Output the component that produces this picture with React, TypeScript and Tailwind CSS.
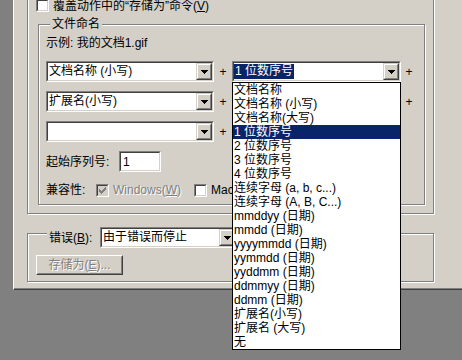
import React from "react";

const items = [
  "文档名称",
  "文档名称 (小写)",
  "文档名称(大写)",
  "1 位数序号",
  "2 位数序号",
  "3 位数序号",
  "4 位数序号",
  "连续字母 (a, b, c...)",
  "连续字母 (A, B, C...)",
  "mmddyy (日期)",
  "mmdd (日期)",
  "yyyymmdd (日期)",
  "yymmdd (日期)",
  "yyddmm (日期)",
  "ddmmyy (日期)",
  "ddmm (日期)",
  "扩展名(小写)",
  "扩展名 (大写)",
  "无",
];

function Arrow() {
  return (
    <svg width="7" height="4" viewBox="0 0 7 4" shapeRendering="crispEdges" className="block">
      <rect x="0" y="0" width="7" height="1" />
      <rect x="1" y="1" width="5" height="1" />
      <rect x="2" y="2" width="3" height="1" />
      <rect x="3" y="3" width="1" height="1" />
    </svg>
  );
}

function DropButton() {
  return (
    <div className="w-[16px] h-full shrink-0 border border-t-[#d4d0c8] border-l-[#d4d0c8] border-r-[#404040] border-b-[#404040] bg-[#d4d0c8]">
      <div className="h-full border border-t-white border-l-white border-r-[#808080] border-b-[#808080] flex items-center justify-center">
        <Arrow />
      </div>
    </div>
  );
}

function Combo({ w, text, focus }: { w: string; text?: string; focus?: boolean }) {
  return (
    <div className={`${w} h-[21px] shrink-0 border border-t-[#808080] border-l-[#808080] border-r-white border-b-white`}>
      <div className="h-full flex border border-t-[#404040] border-l-[#404040] border-r-[#d4d0c8] border-b-[#d4d0c8] bg-white">
        <div className="flex-1 flex items-center overflow-hidden whitespace-nowrap">
          {text && (
            <span className={focus ? "bg-[#0a246a] text-white px-[1px] leading-[15px]" : "px-[1px] leading-[15px]"}>
              {text}
            </span>
          )}
        </div>
        <DropButton />
      </div>
    </div>
  );
}

function Check({ checked, disabled }: { checked?: boolean; disabled?: boolean }) {
  return (
    <div className="w-[13px] h-[13px] shrink-0 border border-t-[#808080] border-l-[#808080] border-r-white border-b-white">
      <div
        className={`h-full border border-t-[#404040] border-l-[#404040] border-r-[#d4d0c8] border-b-[#d4d0c8] flex items-center justify-center ${
          disabled ? "bg-[#d4d0c8]" : "bg-white"
        }`}
      >
        {checked && (
          <svg width="7" height="7" viewBox="0 0 7 7" shapeRendering="crispEdges" fill={disabled ? "#808080" : "#000"}>
            <rect x="0" y="2" width="1" height="3" />
            <rect x="1" y="3" width="1" height="3" />
            <rect x="2" y="4" width="1" height="3" />
            <rect x="3" y="3" width="1" height="3" />
            <rect x="4" y="2" width="1" height="3" />
            <rect x="5" y="1" width="1" height="3" />
            <rect x="6" y="0" width="1" height="3" />
          </svg>
        )}
      </div>
    </div>
  );
}

function Plus({ w }: { w: string }) {
  return <div className={`${w} shrink-0 flex items-center justify-center`}>+</div>;
}

export default function App() {
  return (
    <div className="relative w-[462px] h-[360px] overflow-hidden bg-[#808080] text-[12px] leading-[14px] text-black font-['Liberation_Sans','Noto_Sans_CJK_SC',sans-serif]">
      {/* dialog, top is scrolled off */}
      <div className="ml-[13px] mt-[-30px] w-[449px] h-[320px] bg-[#d4d0c8] border-l border-l-white border-b border-b-[#404040] shadow-[inset_0_-1px_0_#808080] pl-[13px] pt-[10px]">
        <div className="w-[407px] h-[234px] border border-[#808080] shadow-[inset_1px_1px_0_#fff,1px_1px_0_#fff] flex flex-col">
          <div className="mt-[18px] ml-[8px] h-[13px] flex items-center gap-[4px] whitespace-nowrap">
            <Check />
            <span>
              覆盖动作中的“存储为”命令(<span className="underline">V</span>)
            </span>
          </div>

          {/* 文件命名 */}
          <div className="relative mt-[12px] ml-[10px] w-[387px] h-[181px] border border-[#808080] shadow-[inset_1px_1px_0_#fff,1px_1px_0_#fff]">
            <span className="absolute left-[11px] top-[-8px] px-[2px] bg-[#d4d0c8]">文件命名</span>
            <div className="pl-[7px] flex flex-col">
              <div className="mt-[11px]">示例: 我的文档1.gif</div>
              <div className="mt-[11px] flex h-[21px]">
                <Combo w="w-[168px]" text="文档名称 (小写)" />
                <Plus w="w-[18px]" />
                <Combo w="w-[169px]" text="1 位数序号" focus />
                <Plus w="w-[16px]" />
              </div>
              <div className="mt-[9px] flex h-[21px]">
                <Combo w="w-[168px]" text="扩展名(小写)" />
                <Plus w="w-[18px]" />
                <Combo w="w-[169px]" />
                <Plus w="w-[16px]" />
              </div>
              <div className="mt-[9px] flex h-[21px]">
                <Combo w="w-[168px]" />
                <Plus w="w-[18px]" />
                <Combo w="w-[169px]" />
              </div>
              <div className="mt-[9px] flex items-center h-[21px]">
                <span className="w-[73px]">起始序列号:</span>
                <div className="w-[42px] h-[21px] border border-t-[#808080] border-l-[#808080] border-r-white border-b-white">
                  <div className="h-full border border-t-[#404040] border-l-[#404040] border-r-[#d4d0c8] border-b-[#d4d0c8] bg-white flex items-center pl-[2px]">
                    1
                  </div>
                </div>
              </div>
              <div className="mt-[11px] flex items-center h-[14px] whitespace-nowrap">
                <span className="w-[50px]">兼容性:</span>
                <Check checked disabled />
                <span className="ml-[4px] w-[81px] text-[#808080] [text-shadow:1px_1px_0_#fff]">
                  Windows(<span className="underline">W</span>)
                </span>
                <Check />
                {/* the open list covers the rest of this label */}
                <span className="ml-[4px] w-[22px] overflow-hidden">Mac</span>
              </div>
            </div>
          </div>
        </div>

        {/* 错误 */}
        <div className="relative mt-[19px] w-[407px] h-[49px] border border-[#808080] shadow-[inset_1px_1px_0_#fff,1px_1px_0_#fff]">
          <div className="absolute left-[19px] top-[-7px] h-[21px] px-[2px] bg-[#d4d0c8] flex items-center">
            <span className="w-[51px] whitespace-nowrap">
              错误(<span className="underline">B</span>):
            </span>
            <Combo w="w-[137px]" text="由于错误而停止" />
          </div>
          <div className="mt-[21px] ml-[8px] w-[87px] h-[20px] border border-t-white border-l-white border-r-[#404040] border-b-[#404040]">
            <div className="h-full border border-t-[#d4d0c8] border-l-[#d4d0c8] border-r-[#808080] border-b-[#808080] flex items-center justify-center text-[#808080] [text-shadow:1px_1px_0_#fff] whitespace-nowrap">
              存储为(<span className="underline">E</span>)...
            </div>
          </div>
        </div>
      </div>

      {/* open dropdown list */}
      <div className="absolute left-[232px] top-[82px] w-[169px] h-[268px] border border-black bg-white z-10">
        {items.map((it, i) => (
          <div
            key={it}
            className={`h-[14px] leading-[14px] pl-[1px] whitespace-nowrap ${
              i === 3 ? "bg-[#0a246a] text-white" : ""
            }`}
          >
            {it}
          </div>
        ))}
      </div>
    </div>
  );
}
